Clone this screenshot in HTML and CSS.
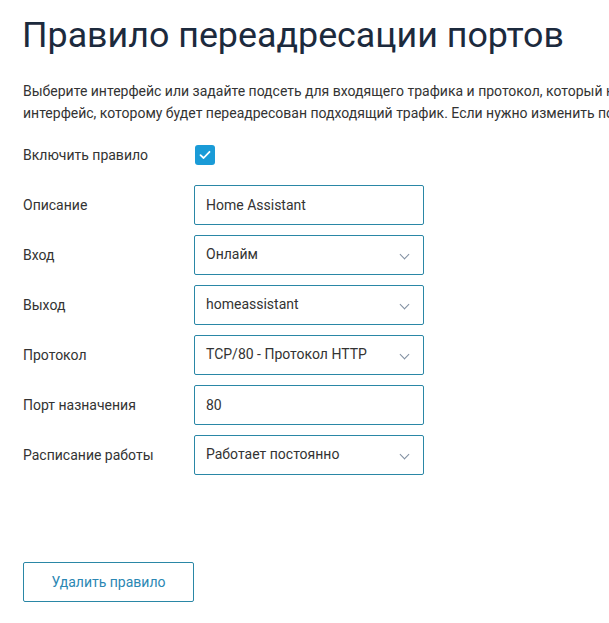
FILE: index.html
```html
<!DOCTYPE html>
<html lang="ru">
<head>
    <meta charset="UTF-8">
    <meta name="viewport" content="width=device-width, initial-scale=1.0">
    <title>Правило переадресации портов</title>
    <link rel="stylesheet" href="styles.css">
</head>
<body>
    <h1>Правило переадресации портов</h1>
    <p class="intro">Выберите интерфейс или задайте подсеть для входящего трафика и протокол, который нужно переадресовать, и укажите<br>
    интерфейс, которому будет переадресован подходящий трафик. Если нужно изменить порт назначения, укажите его.</p>

    <form class="rule-form">
        <div class="form-row">
            <label>Включить правило</label>
            <span class="checkbox">
                <svg width="12" height="10" viewBox="0 0 12 10"><path d="M1.5 5.2 L4.6 8 L10.5 1.8" fill="none" stroke="#fff" stroke-width="1.8" stroke-linecap="round" stroke-linejoin="round"/></svg>
            </span>
        </div>
        <div class="form-row">
            <label>Описание</label>
            <div class="field">Home Assistant</div>
        </div>
        <div class="form-row">
            <label>Вход</label>
            <div class="field select">Онлайм</div>
        </div>
        <div class="form-row">
            <label>Выход</label>
            <div class="field select">homeassistant</div>
        </div>
        <div class="form-row">
            <label>Протокол</label>
            <div class="field select">TCP/80 - Протокол HTTP</div>
        </div>
        <div class="form-row">
            <label>Порт назначения</label>
            <div class="field">80</div>
        </div>
        <div class="form-row">
            <label>Расписание работы</label>
            <div class="field select">Работает постоянно</div>
        </div>
    </form>

    <button type="button" class="btn-outline">Удалить правило</button>
</body>
</html>
```

FILE: styles.css
```css
body {
    font-family: Roboto, "Liberation Sans", sans-serif;
    margin: 0;
    padding: 0 0 0 23px;
    color: #333;
    overflow: hidden;
    white-space: nowrap;
}
h1 {
    font-size: 35.8px;
    font-weight: 400;
    color: #1c2a3d;
    margin: 13px 0 0 -1px;
    line-height: 44px;
}
.intro {
    font-size: 14px;
    line-height: 22px;
    margin: 23px 0 0;
}
.rule-form {
    margin-top: 11px;
}
.form-row {
    display: flex;
    align-items: center;
    height: 40px;
    margin-bottom: 10px;
}
.form-row label {
    width: 171px;
    font-size: 14px;
}
.checkbox {
    width: 20px;
    height: 20px;
    border-radius: 3px;
    background: #1a9bd7;
    display: flex;
    align-items: center;
    justify-content: center;
    margin-left: 1px;
}
.field {
    box-sizing: border-box;
    width: 230px;
    height: 40px;
    border: 1px solid #2a87a6;
    border-radius: 2px;
    padding: 0 11px;
    display: flex;
    align-items: center;
    font-size: 14px;
    color: #333;
}
.field.select {
    position: relative;
    padding-bottom: 2px;
}
.field.select::after {
    content: "";
    position: absolute;
    right: 15px;
    top: 15px;
    width: 6px;
    height: 6px;
    border-right: 1.3px solid #7f8ea0;
    border-bottom: 1.3px solid #7f8ea0;
    transform: rotate(45deg);
}
.btn-outline {
    margin-top: 77px;
    width: 171px;
    height: 40px;
    background: #fff;
    border: 1px solid #2a87a6;
    border-radius: 2px;
    color: #2b87b3;
    font-family: Roboto, "Liberation Sans", sans-serif;
    font-size: 14px;
    cursor: pointer;
}
```
